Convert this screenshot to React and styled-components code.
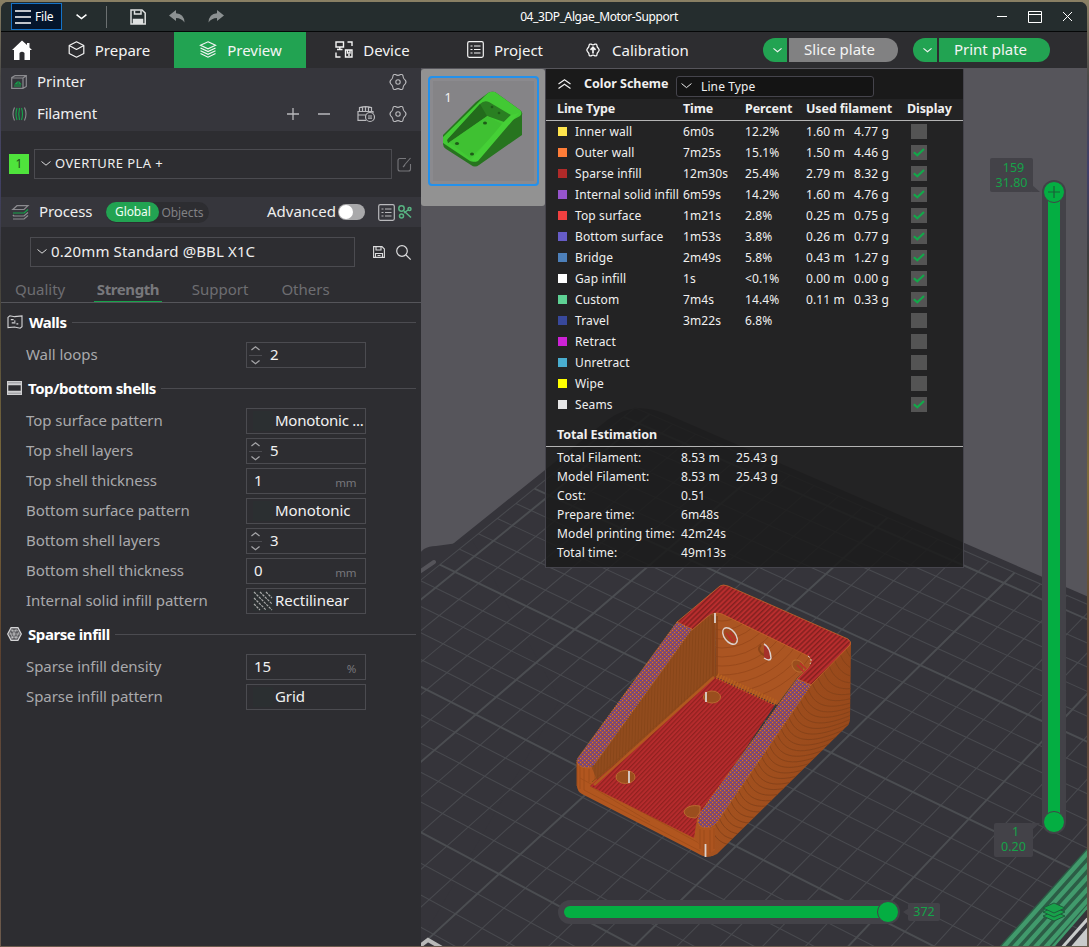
import React from "react";
import styled, { createGlobalStyle, css } from "styled-components";

const Global = createGlobalStyle`
  * { box-sizing: border-box; }
  html, body { margin: 0; padding: 0; }
  body { font-family: "Noto Sans", "Open Sans", sans-serif; overflow: hidden; }
`;

const Desktop = styled.div`
  width: 1089px;
  height: 947px;
  padding: 2px 2px 1px 1px;
  background: linear-gradient(180deg, #8a8064 0, #4b4a48 8%, #41406a 18%, #3d3d3d 27%, #7d6a3a 50%, #5a4030 70%, #6c5a4c 100%);
`;
const Window = styled.div`
  width: 1086px;
  height: 944px;
  display: flex;
  flex-direction: column;
  overflow: hidden;
  border-radius: 7px 7px 0 0;
  background: #2d2d31;
`;
const Icon = styled.svg.attrs((p) => ({ fill: "none", stroke: p.stroke || "currentColor" }))`
  display: block;
  flex: none;
  overflow: visible;
`;

/* ---------- title bar ---------- */
const TitleBar = styled.div`
  height: 30px;
  flex: none;
  display: grid;
  grid-template-columns: 420px 1fr 330px;
  align-items: center;
  background: #252d2e;
  border-bottom: 1px solid #050707;
  color: #fff;
`;
const TitleLeft = styled.div`
  display: flex;
  align-items: center;
  padding-left: 10px;
`;
const FileButton = styled.div`
  width: 51px;
  height: 27px;
  display: flex;
  align-items: center;
  gap: 4px;
  padding-left: 3px;
  border: 1px solid #1473c8;
  background: #04152b;
  font-size: 12px;
  letter-spacing: -0.2px;
`;
const TitleGap = styled.div`
  width: ${(p) => p.$w}px;
  flex: none;
`;
const TitleDivider = styled.div`
  width: 1px;
  height: 22px;
  background: #6b7071;
`;
const Title = styled.div`
  font-size: 12px;
  text-align: center;
  padding-left: 20px;
  white-space: nowrap;
  letter-spacing: -0.4px;
`;
const TitleRight = styled.div`
  display: flex;
  justify-content: flex-end;
  align-items: center;
  gap: 21px;
  padding-right: 15px;
`;

/* ---------- main tabs ---------- */
const TabBar = styled.div`
  height: 36px;
  flex: none;
  display: flex;
  align-items: center;
  background: #2d2d30;
  color: #f4f4f4;
`;
const Home = styled.div`
  width: 42px;
  display: flex;
  padding-left: 11px;
`;
const MainTab = styled.div`
  width: ${(p) => p.$w}px;
  height: 36px;
  display: flex;
  align-items: center;
  justify-content: center;
  gap: ${(p) => p.$gap || 10}px;
  background: ${(p) => (p.$active ? "#22a352" : "transparent")};
  font-size: 15px;
  line-height: 20px;
  padding: 0 0 1px 1px;
  white-space: nowrap;
`;
const PlateButton = styled.div`
  display: flex;
  gap: 2px;
  height: 24px;
  margin-left: ${(p) => p.$ml}px;
`;
const PlateArrow = styled.div`
  width: 24px;
  display: flex;
  align-items: center;
  justify-content: center;
  padding-left: 4px;
  border-radius: 12px 0 0 12px;
  background: #22a352;
`;
const PlateMain = styled.div`
  width: ${(p) => p.$w}px;
  display: flex;
  align-items: center;
  justify-content: center;
  padding: 0 8px 2px 0;
  border-radius: 0 12px 12px 0;
  background: ${(p) => p.$bg};
  font-size: 15px;
  white-space: nowrap;
`;

/* ---------- sidebar ---------- */
const Body = styled.div`
  flex: 1;
  display: flex;
  min-height: 0;
`;
const Sidebar = styled.div`
  width: 420px;
  flex: none;
  display: flex;
  flex-direction: column;
  color: #efefef;
`;
const HeaderRow = styled.div`
  height: ${(p) => p.$h}px;
  flex: none;
  display: flex;
  align-items: center;
  background: #36363c;
  color: #b9b9bc;
`;
const HeaderIcon = styled.div`
  width: ${(p) => p.$w || 36}px;
  display: flex;
  padding-left: ${(p) => p.$pl || 10}px;
  color: #8b8b8f;
`;
const HeaderText = styled.div`
  margin-top: ${(p) => p.$mt ?? -2}px;
  color: #efefef;
  font-size: 15px;
  line-height: 20px;
  white-space: nowrap;
  letter-spacing: ${(p) => p.$ls || "0px"};
`;
const HeaderTools = styled.div`
  margin-left: auto;
  display: flex;
  align-items: center;
  padding-right: ${(p) => p.$pr ?? 14}px;
`;
const FilamentRow = styled.div`
  height: 66px;
  flex: none;
  display: flex;
  align-items: center;
  padding: 0 8px;
  gap: 5px;
  color: #77777b;
`;
const Swatch = styled.div`
  width: 20px;
  height: 20px;
  background: #4fe33c;
  color: #1f4a1a;
  font-size: 12px;
  line-height: 20px;
  text-align: center;
`;
const Combo = styled.div`
  width: ${(p) => p.$w}px;
  height: 30px;
  display: flex;
  align-items: center;
  gap: 4px;
  padding: 0 0 2px 6px;
  border: 1px solid #4b4b50;
  color: #efefef;
  font-size: ${(p) => p.$fs}px;
  white-space: nowrap;
  letter-spacing: ${(p) => p.$ls || "0px"};
`;
const Segmented = styled.div`
  display: flex;
  align-items: center;
  width: 103px;
  height: 21px;
  margin-left: 14px;
  border-radius: 11px;
  background: #2d2d31;
  color: #818184;
  font-size: 12px;
  letter-spacing: -0.05px;
`;
const SegmentOn = styled.div`
  width: 53px;
  height: 20px;
  margin-right: 2px;
  border-radius: 10px;
  background: #22a352;
  color: #f2fff6;
  line-height: 19px;
  text-align: center;
  letter-spacing: -0.1px;
`;
const Toggle = styled.div`
  width: 27px;
  height: 16px;
  margin: 0 13px 1px 2px;
  padding: 1px;
  border-radius: 8px;
  background: #a9a9ab;
  &::before {
    content: "";
    display: block;
    width: 14px;
    height: 14px;
    border-radius: 50%;
    background: #fff;
  }
`;
const PresetRow = styled.div`
  height: 50px;
  flex: none;
  display: flex;
  align-items: center;
  padding-left: 29px;
  color: #dcdcdd;
`;
const SubTabs = styled.div`
  height: 26px;
  flex: none;
  display: flex;
  align-items: stretch;
  border-bottom: 1px solid #55555a;
  padding-left: 14px;
  font-size: 15px;
  color: #6d6d71;
`;
const SubTab = styled.div`
  width: ${(p) => p.$w}px;
  margin-right: ${(p) => p.$mr}px;
  line-height: 24px;
  height: 25px;
  text-align: center;
  white-space: nowrap;
  ${(p) =>
    p.$on &&
    css`
      font-weight: 700;
      letter-spacing: -0.4px;
      color: #78787c;
      border-bottom: 1px solid #16a34a;
    `}
`;
const GroupHead = styled.div`
  height: 36px;
  flex: none;
  display: flex;
  align-items: center;
  padding: 1px 5px 0 6px;
  color: #d4d4d6;
`;
const GroupIcon = styled.div`
  height: 15px;
  margin-top: 2px;
  display: flex;
`;
const GroupTitle = styled.div`
  margin-left: 6px;
  font-size: 15px;
  font-weight: 700;
  color: #fff;
  white-space: nowrap;
  letter-spacing: -0.43px;
`;
const GroupRule = styled.div`
  flex: 1;
  height: 1px;
  margin: 1px 0 0 5px;
  background: #4b4b50;
`;
const Setting = styled.div`
  height: 30px;
  flex: none;
  display: flex;
  align-items: center;
  padding: 2px 0 0 25px;
`;
const SettingLabel = styled.div`
  width: 220px;
  margin-top: -2px;
  font-size: 15px;
  color: #a9a9ac;
  white-space: nowrap;
  letter-spacing: -0.05px;
`;
const Field = styled.div`
  width: 120px;
  height: 26px;
  display: flex;
  align-items: center;
  border: 1px solid #4b4b50;
  padding: 0 9px 2px ${(p) => p.$pl}px;
  font-size: 15px;
  color: #f1f1f1;
  white-space: nowrap;
`;
const FieldIcon = styled.div`
  width: 22px;
  margin-top: 2px;
  flex: none;
  color: #a8a8a8;
`;
const FieldText = styled.span`
  letter-spacing: ${(p) => p.$ls || "-0.05px"};
`;
const Spin = styled.div`
  width: 13px;
  height: 18px;
  margin: 2px 8px 0 0;
  display: flex;
  flex-direction: column;
  justify-content: space-between;
  align-items: center;
  color: #a5a5a8;
`;
const SpinRule = styled.div`
  width: 13px;
  height: 1px;
  background: #4b4b50;
`;
const Unit = styled.span`
  margin: 4px 0 0 auto;
  font-size: 11.5px;
  letter-spacing: -0.4px;
  color: #77777c;
`;

/* ---------- viewport ---------- */
const Viewport = styled.div`
  position: relative;
  flex: 1;
  background: #56555b;
`;
const Scene = styled.svg`
  position: absolute;
  inset: 0;
  display: block;
`;
const ThumbCard = styled.div`
  position: absolute;
  left: 0;
  top: 1px;
  width: 124px;
  height: 137px;
  padding: 7px 0 0 7px;
  border-radius: 3px;
  background: #929292;
`;
const ThumbFrame = styled.div`
  width: 111px;
  height: 110px;
  border: 2px solid #2391ec;
  border-radius: 4px;
  background: #858487;
  box-shadow: inset 0 0 0 3px #8b8a8e;
`;
const Legend = styled.div`
  position: absolute;
  left: 124px;
  top: 1px;
  width: 419px;
  height: 499px;
  border: 1px solid #45444c;
  border-top: 0;
  background: rgba(27, 27, 27, 0.86);
  color: #f0f0f0;
  font-size: 12px;
  letter-spacing: 0.12px;
`;
const LegendTop = styled.div`
  height: 30px;
  display: flex;
  align-items: center;
  padding-left: 12px;
  background: #1a1a1a;
`;
const LegendTitle = styled.div`
  width: 92px;
  margin: -1px 0 0 13px;
  font-weight: 700;
  font-size: 12.5px;
  letter-spacing: -0.03px;
  white-space: nowrap;
`;
const SchemeSelect = styled.div`
  width: 198px;
  height: 21px;
  margin-top: 4px;
  display: flex;
  align-items: center;
  gap: 9px;
  padding-left: 4px;
  border: 1px solid #45444c;
  border-radius: 3px;
  background: #141414;
`;
const LegendHead = styled.div`
  height: 22px;
  display: grid;
  grid-template-columns: 126px 62px 61px 101px 1fr;
  align-items: center;
  padding: 0 0 3px 11px;
  border-bottom: 1px solid #b4b4b4;
  font-weight: 700;
  font-size: 12.5px;
  letter-spacing: -0.1px;
  white-space: nowrap;
`;
const LegendRow = styled.div`
  height: 21px;
  display: grid;
  grid-template-columns: 18px 108px 62px 61px 48px 57px 16px;
  align-items: center;
  padding-left: 11px;
  white-space: nowrap;
`;
const Dot = styled.div`
  width: 9px;
  height: 9px;
  margin-left: 1px;
  background: ${(p) => p.$c};
`;
const Check = styled.div`
  width: 16px;
  height: 15px;
  padding: 3px 0 0 2px;
  background: #545454;
  color: #12a84a;
`;
const TotalTitle = styled.div`
  height: 32px;
  padding: 11px 0 0 11px;
  border-bottom: 1px solid #b4b4b4;
  font-weight: 700;
  font-size: 12.5px;
  line-height: 17px;
  letter-spacing: -0.08px;
`;
const TotalRow = styled.div`
  height: 19px;
  display: grid;
  grid-template-columns: 124px 55px 1fr;
  align-items: center;
  padding-left: 11px;
  white-space: nowrap;
`;
const TotalRows = styled.div`
  padding-top: 1px;
`;
const VTrack = styled.div`
  position: absolute;
  left: 621px;
  top: 112px;
  width: 24px;
  height: 654px;
  padding: 12px 6px;
  border-radius: 12px;
  background: #434248;
`;
const HTrack = styled.div`
  position: absolute;
  left: 137px;
  top: 832px;
  width: 342px;
  height: 24px;
  padding: 6px 12px 6px 6px;
  border-radius: 12px;
  background: #434248;
`;
const Bar = styled.div`
  height: 100%;
  border-radius: 6px;
  background: #04ae42;
`;
const Knob = styled.div`
  position: absolute;
  left: ${(p) => p.$x}px;
  top: ${(p) => p.$y}px;
  width: 22px;
  height: 22px;
  display: flex;
  align-items: center;
  justify-content: center;
  border-radius: 50%;
  border: 1px solid #434248;
  background: #04ae42;
  color: #1b5f38;
`;
const Tip = styled.div`
  position: absolute;
  left: ${(p) => p.$x}px;
  top: ${(p) => p.$y}px;
  width: ${(p) => p.$w}px;
  height: ${(p) => p.$h}px;
  border-radius: 2px;
  background: #434248;
  color: #15a249;
  font-size: 12.5px;
  line-height: 15px;
  text-align: center;
  padding-top: ${(p) => p.$pt ?? 2}px;
`;
const TipTop = styled.div`
  padding-left: 4px;
`;
const TipTail = styled.svg`
  position: absolute;
  left: ${(p) => p.$x}px;
  top: ${(p) => p.$y}px;
  fill: #434248;
`;

/* ---------- bed geometry ---------- */
const solve = (m) => {
  const n = m.length;
  for (let i = 0; i < n; i++) {
    let k = i;
    for (let r = i; r < n; r++) if (Math.abs(m[r][i]) > Math.abs(m[k][i])) k = r;
    [m[i], m[k]] = [m[k], m[i]];
    for (let r = 0; r < n; r++) {
      if (r === i) continue;
      const f = m[r][i] / m[i][i];
      for (let c = i; c <= n; c++) m[r][c] -= f * m[i][c];
    }
  }
  return m.map((row, i) => row[n] / row[i]);
};
const anchors = [
  [0, 1, 455, 572],
  [3, -1, 1004, 583],
  [4, 2, 876, 917],
  [2, 3, 499, 874],
];
const H = solve(
  anchors.flatMap(([u, v, x, y]) => [
    [u, v, 1, 0, 0, 0, -u * x, -v * x, x],
    [0, 0, 0, u, v, 1, -u * y, -v * y, y],
  ])
);
const project = (u, v) => {
  const w = H[6] * u + H[7] * v + 1;
  return [(H[0] * u + H[1] * v + H[2]) / w, (H[3] * u + H[4] * v + H[5]) / w];
};
const seg = (a, b) => `M${a.map((n) => n.toFixed(1)).join(" ")}L${b.map((n) => n.toFixed(1)).join(" ")}`;
const U0 = -0.13, V0 = -1.13, UM = 5.1, VM = 4;
const thin = [seg(project(U0, V0), project(U0, VM)), seg(project(U0, V0), project(UM, V0))];
const bold = [];
for (let i = 0; i <= 25; i++) (i % 5 ? thin : bold).push(seg(project(i / 5, V0), project(i / 5, VM)));
for (let i = -5; i <= 20; i++) (i % 5 ? thin : bold).push(seg(project(U0, i / 5), project(UM, i / 5)));
const bedPath = () => {
  const e = -0.2, f = -1.2;
  const p = [project(e, VM), project(e, f + 0.3), project(e, f), project(e + 0.3, f), project(UM, f), project(UM, VM)];
  const s = p.map((q) => q.map((n) => n.toFixed(1)).join(" "));
  return `M${s[0]}L${s[1]}Q${s[2]} ${s[3]}L${s[4]}L${s[5]}Z`;
};

const Bed = () => (
  <g>
    <path d={bedPath()} fill="#35343a" />
    <path d="M416 950V556L424 549Q429 546 436 546L458 543Q465 541 470 536L560 700Z" fill="#35343a" />
    <path d="M418 573L434 562" stroke="#55545a" strokeWidth="4" strokeLinecap="round" />
    <path d={thin.join("")} stroke="#48494e" strokeWidth="1.1" fill="none" />
    <path d={bold.join("")} stroke="#4b4d51" strokeWidth="2" fill="none" />
    <path d="M420 946L428 940L442 948" stroke="#b9b9b9" strokeWidth="4" fill="none" />
    <path d="M1089 846L998 948H1052L1089 905Z" fill="#2c5d46" />
    <g stroke="#419a6c" strokeWidth="4.400">
      <path d="M1092 848L1001 950M1092 860L1011.500 950M1092 872L1022 950M1092 884L1032.500 950M1092 895L1043 950" />
    </g>
    <path d="M1089 905L1050 950" stroke="#419a6c" strokeWidth="2.500" />
    <path d="M1092 914L1060 950" stroke="#c9cbcb" strokeWidth="3" />
    <path d="M1092 922V950H1068Z" fill="#c9cbcb" />
    <g fill="#17a24a" stroke="#1f5c3c" strokeWidth="1">
      <path d="M1043 917L1054 912L1065 917L1054 922Z" transform="translate(0 -1)" />
      <path d="M1043 912L1054 907L1065 912L1054 917Z" />
      <path d="M1043 908L1054 903L1065 908L1054 913Z" />
    </g>
  </g>
);

const SIDE = "M851 642L850 719Q850 724 846 727L717 854Q712 857 706 857L708 828L717 822L811 685Z";
const BACK = "M715 613H721L812 657L812 664L797 678L777 705L716 677Z";

const shellCurves = Array.from({ length: 34 }, (_, i) => {
  const t = i / 33;
  const x = t < 0.22 ? 851 - (t / 0.22) * 40 : 811 - ((t - 0.22) / 0.78) * 100;
  const y = t < 0.22 ? 642 + (t / 0.22) * 43 : 685 + ((t - 0.22) / 0.78) * 143;
  return `M${x.toFixed(1)} ${y.toFixed(1)}C${(x + 7).toFixed(1)} ${(y + 19).toFixed(1)} ${(x + 24).toFixed(1)} ${(y + 24).toFixed(1)} ${(x + 62).toFixed(1)} ${(y + 6).toFixed(1)}`;
});

const Part = () => (
  <g>
    <defs>
      <pattern id="ledge" width="3.6" height="3.6" patternUnits="userSpaceOnUse" patternTransform="rotate(-44)">
        <rect width="3.6" height="3.6" fill="#b92d2e" />
        <rect width="3.6" height="1.5" fill="#84201f" />
      </pattern>
      <pattern id="floor" width="3.6" height="3.2" patternUnits="userSpaceOnUse" patternTransform="rotate(-46)">
        <rect width="3.6" height="3.2" fill="#b52b2d" />
        <rect width="3.6" height="1.2" fill="#90211f" />
      </pattern>
      <pattern id="slope" width="4" height="4" patternUnits="userSpaceOnUse">
        <rect width="4" height="4" fill="#96504e" />
        <rect width="2" height="1" fill="#6440a0" />
        <rect x="2" y="2" width="2" height="1" fill="#6440a0" />
        <rect x="2" width="1" height="1" fill="#d0733a" />
        <rect y="2" width="1" height="1" fill="#d0733a" />
      </pattern>
      <pattern id="ribs" width="3" height="6" patternUnits="userSpaceOnUse" patternTransform="rotate(2)">
        <rect width="3" height="6" fill="#914b1d" />
        <rect width="1" height="6" fill="#884619" />
      </pattern>
      <linearGradient id="sideFill" x1="0" y1="0" x2="1" y2="0">
        <stop offset="0" stopColor="#a5521f" />
        <stop offset="1" stopColor="#98491b" />
      </linearGradient>
      <clipPath id="sideClip"><path d={SIDE} /></clipPath>
      <clipPath id="backClip"><path d={BACK} /></clipPath>
    </defs>
    <path d="M577 760V786Q577 791 582 794L697 853Q706 859 714 855L725 822L700 800L600 770Z" fill="#b1561f" />
    <path d="M580 778L697 842L706 850M590 786L650 822M584 790L700 851" stroke="#a04d1a" strokeWidth="0.900" fill="none" />
    <path d="M577 762V786M580 766V789M584 768V790M589 769V782M595 766V780" stroke="#9e4c1a" strokeWidth="1" />
    <path d={SIDE} fill="url(#sideFill)" />
    <g clipPath="url(#sideClip)" fill="none" stroke="#87431a" strokeWidth="1">
      {shellCurves.map((d) => <path key={d} d={d} />)}
    </g>
    <path d="M692 629L706 617L715 613L716 677L598 783L592 768Z" fill="url(#ribs)" />
    <path d={BACK} fill="#ab5522" />
    <g clipPath="url(#backClip)" fill="none" stroke="#9a4a1c" strokeWidth="1">
      {Array.from({ length: 11 }, (_, i) => (
        <ellipse key={i} cx="722" cy="600" rx={16 + i * 9} ry={12 + i * 9} />
      ))}
    </g>
    <path d="M713 616V676M717 616V676" stroke="#8a4319" strokeWidth="1.5" />
    <path d="M715 677L775 705L740 757L697 820L694 838L590 786L598 779Z" fill="url(#floor)" />
    <path d="M714 677L594 785" stroke="#b0591f" strokeWidth="2.500" />
    <path d="M714 674L592 782" stroke="#8b481a" strokeWidth="1" />
    <path d="M717 676L776 703" stroke="#b8621f" strokeWidth="6" strokeDasharray="1.5 1.5" />
    <path d="M677 622L720 586Q723 584 728 586L848 639Q852 642 850 645L811 685L797 679L808 668Q814 660 808 656L722 614Q714 611 707 617L692 630Z" fill="url(#ledge)" stroke="#c4672a" strokeWidth="0.8" />
    <path d="M677 622L692 629L594 765Q588 770 580 766Q575 763 578 758Z" fill="url(#slope)" stroke="#c06a2a" strokeWidth="1" strokeDasharray="1.5 1" />
    <path d="M797 679L811 685L717 822Q709 831 700 826Q696 821 700 813Z" fill="url(#slope)" stroke="#c06a2a" strokeWidth="1" strokeDasharray="1.5 1" />
    <path d="M696 824L695 838L706 856L715 850V826Q706 832 696 824Z" fill="#ad541f" />
    <path d="M700 829V849M704 830V853M710 830V853M714 828V849" stroke="#9b4b1a" strokeWidth="1" />
    <g fill="#9a4e1e" stroke="#b86a2e" strokeWidth="1">
      <ellipse cx="712" cy="697" rx="8.5" ry="6" />
      <ellipse cx="625.500" cy="777" rx="9.500" ry="6.500" />
      <path d="M700 806Q688 804 684 811Q684 818 696 818L700 812Z" />
      <ellipse cx="798" cy="666" rx="7" ry="5" transform="rotate(45 798 666)" />
    </g>
    <path d="M761 645Q757 649 761 653Q765 656 768 658" stroke="#8d4519" strokeWidth="2" fill="none" />
    <g fill="none" stroke="#dcd2ce" strokeWidth="1.400">
      <ellipse cx="730" cy="636" rx="9.500" ry="5.600" transform="rotate(52 730 636)" fill="#a24a1f" />
      <path d="M764 644Q770 647 771 658Q770 662 764 658" fill="#a5312a" />
      <path d="M706 692V702M629 771V783M705.500 844V857M715 613V623" strokeWidth="1.8" />
      <path d="M808 656Q813 659 810 664" strokeDasharray="2 2" strokeWidth="1" />
    </g>
    <path d="M726 633L734 642M728 636L732 641M730 632L736 640M797 665L804 672M800 663L806 669" stroke="#bb2e2a" strokeWidth="1.500" />
  </g>
);

const ThumbModel = () => (
  <Icon width="107" height="106" viewBox="430 78 107 106" stroke="none">
    <path d="M443 135L476 102L488 93Q491 91 495 92L520 110Q523 112 522 115V135L479 165Q475 168 471 165L446 149Q443 147 443 144Z" fill="#27741f" />
    <path d="M443 137L488 93Q491 91 495 92L520 110Q523 113 520 116L507 123L478 160Q474 163 470 161L443 143Z" fill="#42c934" />
    <path d="M448 139L480 104Q484 100 489 102L511 115L507 123L487 116L448 143Z" fill="#2a7f22" />
    <path d="M487 116L502 124L497 132L470 158L449 142Z" fill="#3fc132" />
    <path d="M511 115L519 113L478 161Q475 163 471 160L497 130Q504 121 511 115Z" fill="#45d036" />
    <path d="M480 104L487 116L448 143L447 140Z" fill="#236b1c" />
    <g fill="#1e5c18">
      <ellipse cx="485" cy="123" rx="2" ry="1.500" />
      <ellipse cx="457" cy="143.500" rx="2" ry="1.500" />
      <ellipse cx="472" cy="154" rx="2" ry="1.500" />
      <circle cx="492" cy="107" r="1.300" />
      <circle cx="499" cy="113" r="1.300" />
    </g>
    <text x="444.500" y="102" fontSize="12.500" fill="#f4f4f4">1</text>
  </Icon>
);

/* ---------- small drawings ---------- */
const Chevron = ({ w = 10, up, sw = 1.2 }) => (
  <Icon width={w} height={w / 2} viewBox="0 0 10 5" strokeWidth={sw}>
    <path d={up ? "M0.500 4.500L5 0.800L9.500 4.500" : "M0.500 0.500L5 4.200L9.500 0.500"} />
  </Icon>
);
const GEAR =
  "M5 1.500H6.500Q9 3.200 11.500 1.500H13Q14.200 2 14.200 4Q14.400 5.600 16.200 7.200Q17.800 9 16.200 10.800Q14.400 12.400 14.200 14Q14.200 16 13 16.500H11.500Q9 14.800 6.500 16.500H5Q3.800 16 3.800 14Q3.600 12.400 1.800 10.800Q0.200 9 1.800 7.200Q3.600 5.600 3.800 4Q3.800 2 5 1.500Z";
const Gear = () => (
  <Icon width="18" height="18" viewBox="0 0 18 18" strokeWidth="1.100">
    <path d={GEAR} strokeLinejoin="round" />
    <circle cx="9" cy="9" r="2.200" />
  </Icon>
);
const ListIcon = ({ s = 17 }) => (
  <Icon width={s} height={s} viewBox="0 0 17 17" strokeWidth="1.200">
    <rect x="0.700" y="0.700" width="15.600" height="15.600" rx="1.500" />
    <path d="M3.500 5H5.500M7 5H13.500M3.500 8.500H5.500M7 8.500H13.500M3.500 12H5.500M7 12H13.500" />
  </Icon>
);

const settingField = (kind, value, unit) => {
  if (kind === "spin")
    return (
      <Field $pl={2}>
        <Spin>
          <Chevron w={9} up sw={1.400} />
          <SpinRule />
          <Chevron w={9} sw={1.400} />
        </Spin>
        {value}
      </Field>
    );
  if (kind === "text")
    return (
      <Field $pl={7}>
        {value}
        <Unit>{unit}</Unit>
      </Field>
    );
  return (
    <Field $pl={6}>
      <FieldIcon>
        <Icon width="20" height="20" viewBox="0 0 20 20">
          <rect width="20" height="20" fill="#2b2f31" stroke="none" />
          {unit === "lines" && (
            <path d="M1 1L19 19M7 1L19 13M13 1L19 7M1 7L13 19M1 13L7 19" strokeWidth="1.200" strokeDasharray="2.500 1" />
          )}
        </Icon>
      </FieldIcon>
      <FieldText $ls={value.endsWith("...") ? "-0.25px" : undefined}>{value}</FieldText>
    </Field>
  );
};

const groups = [
  {
    title: "Walls",
    icon: (
      <Icon width="16" height="14" viewBox="0 0 17 15" strokeWidth="1.200">
        <path d="M1 2.500L3 0.800L8 1.800L16 1V12.500L14 14.200L8 12.800L1 13.500Z M4 5H7M7.500 6.500H9M5 8.500H9M10 9.500H12" />
      </Icon>
    ),
    rows: [["Wall loops", "spin", "2"]],
  },
  {
    title: "Top/bottom shells",
    icon: (
      <Icon width="15" height="14" viewBox="0 0 15 14" stroke="none">
        <path d="M0 0H15V14H0ZM1.300 4.200V9.800H13.700V4.200Z" fillRule="evenodd" fill="#cfcfd1" />
        <path d="M1 1.800H14M1 12.200H14" stroke="#85858a" strokeWidth="0.800" />
      </Icon>
    ),
    rows: [
      ["Top surface pattern", "combo", "Monotonic ..."],
      ["Top shell layers", "spin", "5"],
      ["Top shell thickness", "text", "1", "mm"],
      ["Bottom surface pattern", "combo", "Monotonic"],
      ["Bottom shell layers", "spin", "3"],
      ["Bottom shell thickness", "text", "0", "mm"],
      ["Internal solid infill pattern", "combo", "Rectilinear", "lines"],
    ],
  },
  {
    title: "Sparse infill",
    icon: (
      <Icon width="15" height="14" viewBox="0 0 16 15">
        <path d="M4.300 0.700H11.700L15.300 7.500L11.700 14.300H4.300L0.700 7.500Z" strokeWidth="1.300" fill="#5c5c60" />
        <path d="M4 4H12M2.500 7.500H13.500M4 11H12M5 2L10 13M10 2L5 13M3 5L6 12M13 5L9.500 12" strokeWidth="0.600" />
      </Icon>
    ),
    rows: [
      ["Sparse infill density", "text", "15", "%"],
      ["Sparse infill pattern", "combo", "Grid"],
    ],
  },
];

const legend = [
  ["#ffe54d", "Inner wall", "6m0s", "12.2%", "1.60 m", "4.77 g", 0],
  ["#ff7d38", "Outer wall", "7m25s", "15.1%", "1.50 m", "4.46 g", 1],
  ["#b02a29", "Sparse infill", "12m30s", "25.4%", "2.79 m", "8.32 g", 1],
  ["#9654cc", "Internal solid infill", "6m59s", "14.2%", "1.60 m", "4.76 g", 1],
  ["#f04040", "Top surface", "1m21s", "2.8%", "0.25 m", "0.75 g", 1],
  ["#665cc7", "Bottom surface", "1m53s", "3.8%", "0.26 m", "0.77 g", 1],
  ["#4d80ba", "Bridge", "2m49s", "5.8%", "0.43 m", "1.27 g", 1],
  ["#ffffff", "Gap infill", "1s", "<0.1%", "0.00 m", "0.00 g", 1],
  ["#5ed194", "Custom", "7m4s", "14.4%", "0.11 m", "0.33 g", 1],
  ["#38489b", "Travel", "3m22s", "6.8%", "", "", 0],
  ["#cd22d6", "Retract", "", "", "", "", 0],
  ["#49adcf", "Unretract", "", "", "", "", 0],
  ["#ffff00", "Wipe", "", "", "", "", 0],
  ["#e6e6e6", "Seams", "", "", "", "", 1],
];
const totals = [
  ["Total Filament:", "8.53 m", "25.43 g"],
  ["Model Filament:", "8.53 m", "25.43 g"],
  ["Cost:", "0.51"],
  ["Prepare time:", "6m48s"],
  ["Model printing time:", "42m24s"],
  ["Total time:", "49m13s"],
];

export default function App() {
  return (
    <Desktop>
      <Global />
      <Window>
        <TitleBar>
          <TitleLeft>
            <FileButton>
              <Icon width="16" height="14" viewBox="0 0 16 14" strokeWidth="1.500">
                <path d="M0 1H16M0 7H16M0 13H16" />
              </Icon>
              File
            </FileButton>
            <TitleGap $w={14} />
            <Chevron w={11} sw={1.400} />
            <TitleGap $w={19} />
            <TitleDivider />
            <TitleGap $w={23} />
            <Icon width="16" height="16" viewBox="0 0 16 16" strokeWidth="1.500" stroke="#dfe1e1">
              <path d="M1 1H12L15.200 4V15H1Z" />
              <path d="M4.500 1.500V5H11V1.500" />
              <path d="M3.500 15V10.500H12.500V15" fill="#dfe1e1" />
            </Icon>
            <TitleGap $w={23} />
            <Icon width="16" height="13" viewBox="0 0 16 13" stroke="none">
              <path d="M0 5.500L7 0V3.300Q15 3.500 15.500 12.500Q12.500 8 7 8V11Z" fill="#8c9192" />
            </Icon>
            <TitleGap $w={23} />
            <Icon width="16" height="13" viewBox="0 0 16 13" stroke="none">
              <path d="M16 5.500L9 0V3.300Q1 3.500 0.500 12.500Q3.500 8 9 8V11Z" fill="#8c9192" />
            </Icon>
          </TitleLeft>
          <Title>04_3DP_Algae_Motor-Support</Title>
          <TitleRight>
            <Icon width="10" height="2" viewBox="0 0 10 2"><path d="M0 0.500H10" /></Icon>
            <Icon width="14" height="12" viewBox="0 0 14 12"><path d="M0.500 0.500H13.500V11.500H0.500ZM0.500 3.500H13.500" /></Icon>
            <Icon width="9" height="9" viewBox="0 0 9 9"><path d="M0 0L9 9M9 0L0 9" /></Icon>
          </TitleRight>
        </TitleBar>

        <TabBar>
          <Home>
            <Icon width="20" height="20" viewBox="0 0 20 20" stroke="none">
              <path d="M10 0.500L15 5V3H17.500V7.500L20 10H18V20H12.500V13Q10 10.500 7.500 13V20H2V10H0Z" fill="#fff" />
            </Icon>
          </Home>
          <MainTab $w={131}>
            <Icon width="17" height="17" viewBox="0 0 17 17" strokeWidth="1.200">
              <path d="M8.500 0.800L15.800 4.500V12.500L8.500 16.200L1.200 12.500V4.500ZM1.200 4.500L8.500 8.500L15.800 4.500" strokeLinejoin="round" />
            </Icon>
            Prepare
          </MainTab>
          <MainTab $w={132} $active>
            <Icon width="18" height="17" viewBox="0 0 18 17" strokeWidth="1.200">
              <path d="M9 0.800L16.500 4.300L9 7.800L1.500 4.300ZM1.500 7L9 10.500L16.500 7M1.500 9.800L9 13.300L16.500 9.800M1.500 12.500L9 16.200L16.500 12.500" />
            </Icon>
            Preview
          </MainTab>
          <MainTab $w={132}>
            <Icon width="18" height="17" viewBox="0 0 18 17" strokeWidth="1.400">
              <path d="M1 1H8.500V6H1ZM4.800 6V8.500M2 8.500H7.500M12.500 1H17V5M1 11.500V16H5.500M10.500 9H17V16H10.500ZM12.500 9V12H15V9M13 14H15" />
            </Icon>
            Device
          </MainTab>
          <MainTab $w={133}>
            <ListIcon />
            Project
          </MainTab>
          <MainTab $w={132} $gap={12}>
            <Icon width="14" height="14" viewBox="0 0 18 18" strokeWidth="1.700">
              <path d={GEAR} />
              <path d="M9 13.500V6M5.800 8.800L9 5.500L12.200 8.800" strokeWidth="2.200" />
            </Icon>
            Calibration
          </MainTab>
          <PlateButton $ml={60}>
            <PlateArrow><Chevron w={9} /></PlateArrow>
            <PlateMain $w={109} $bg="#818182">Slice plate</PlateMain>
          </PlateButton>
          <PlateButton $ml={15}>
            <PlateArrow><Chevron w={9} /></PlateArrow>
            <PlateMain $w={111} $bg="#22a352">Print plate</PlateMain>
          </PlateButton>
        </TabBar>

        <Body>
          <Sidebar>
            <HeaderRow $h={28}>
              <HeaderIcon>
                <Icon width="16" height="14" viewBox="0 0 16 14" strokeWidth="1.200">
                  <path d="M0.700 2.500L4 0.700H15.300V11.500L12 13.300H0.700ZM0.700 3H12V13.300M12 3L15.300 0.700" />
                  <path d="M3 11H10M4.500 9H9.500L8 7H6.500Z" stroke="#16a34a" />
                </Icon>
              </HeaderIcon>
              <HeaderText>Printer</HeaderText>
              <HeaderTools><Gear /></HeaderTools>
            </HeaderRow>
            <HeaderRow $h={35}>
              <HeaderIcon $pl={11}>
                <Icon width="15" height="14" viewBox="0 0 15 14" strokeWidth="1.100">
                  <path d="M2.500 0.500Q-0.500 7 2.500 13.500M12.500 0.500Q15.500 7 12.500 13.500" />
                  <path d="M5 1Q3 7 5 13M7.500 1Q6 7 7.500 13M9.500 1Q11.500 7 9.500 13" stroke="#16a34a" />
                </Icon>
              </HeaderIcon>
              <HeaderText $ls="-0.15px">Filament</HeaderText>
              <HeaderTools>
                <Icon width="12" height="12" viewBox="0 0 12 12" strokeWidth="1.300"><path d="M6 0V12M0 6H12" /></Icon>
                <TitleGap $w={19} />
                <Icon width="12" height="12" viewBox="0 0 12 12" strokeWidth="1.300"><path d="M0 6H12" /></Icon>
                <TitleGap $w={27} />
                <Icon width="18" height="16" viewBox="0 0 18 16" strokeWidth="1.200">
                  <path d="M9 14.300H1V5.500H16V7M2.500 5.500V1.500Q9 -0.200 14.500 1.500V5.500M5.500 1V5.500M8.500 1V5.500M11.500 1V5.500M1 9H9" />
                  <circle cx="13" cy="11" r="4.500" />
                  <path d="M11 10H15M11 12.200H15" />
                </Icon>
                <TitleGap $w={14} />
                <Gear />
              </HeaderTools>
            </HeaderRow>
            <FilamentRow>
              <Swatch>1</Swatch>
              <Combo $w={358} $fs={13} $ls="0.400px"><Chevron sw={0.900} />OVERTURE PLA +</Combo>
              <Icon width="15" height="15" viewBox="0 0 15 15" strokeWidth="1.100">
                <path d="M9 1.500H3Q1 1.500 1 3.500V12Q1 14 3 14H11.500Q13.500 14 13.500 12V7M7 8.500L13.500 1M6 10L8 8" />
              </Icon>
            </FilamentRow>
            <HeaderRow $h={30}>
              <HeaderIcon $w={38} $pl={11}>
                <Icon width="17" height="15" viewBox="0 0 17 15" strokeWidth="1.200">
                  <path d="M0.800 4.500L5 0.700H16L12 4.500ZM1 11L12 11L16 7.500M0.800 11L2 10M1 14L12 14L16 10.500" />
                  <path d="M1 8H12L16 4.500" stroke="#16a34a" />
                </Icon>
              </HeaderIcon>
              <HeaderText $mt={-3} $ls="-0.100px">Process</HeaderText>
              <Segmented><SegmentOn>Global</SegmentOn>Objects</Segmented>
              <HeaderTools $pr={9}>
                <HeaderText $mt={-3}>Advanced</HeaderText>
                <Toggle />
                <ListIcon />
                <TitleGap $w={3} />
                <Icon width="14" height="14" viewBox="0 0 14 14" strokeWidth="1.500" stroke="#58b482">
                  <circle cx="3.500" cy="3.500" r="2.700" />
                  <circle cx="3.500" cy="11" r="2" />
                  <circle cx="11.500" cy="4" r="1.500" />
                  <path d="M6 6L13 12.500M6 8L10 5" />
                </Icon>
              </HeaderTools>
            </HeaderRow>
            <PresetRow>
              <Combo $w={325} $fs={15} $ls="0.120px"><Chevron sw={0.900} />0.20mm Standard @BBL X1C</Combo>
              <TitleGap $w={18} />
              <Icon width="12" height="12" viewBox="0 0 12 12" strokeWidth="1.100">
                <path d="M0.600 0.600H9L11.400 3V11.400H0.600ZM3 0.600V4H8V0.600M2.500 11.400V7.500H9.500V11.400M4.500 9.500H7.500" />
              </Icon>
              <TitleGap $w={11} />
              <Icon width="15" height="15" viewBox="0 0 15 15" strokeWidth="1.200">
                <circle cx="6" cy="6" r="5.300" />
                <path d="M10 10L14.700 14.700" />
              </Icon>
            </PresetRow>
            <SubTabs>
              <SubTab $w={50} $mr={29}>Quality</SubTab>
              <SubTab $w={68} $mr={29} $on>Strength</SubTab>
              <SubTab $w={58} $mr={32}>Support</SubTab>
              <SubTab $w={49} $mr={0}>Others</SubTab>
            </SubTabs>
            {groups.map((g) => (
              <React.Fragment key={g.title}>
                <GroupHead>
                  <GroupIcon>{g.icon}</GroupIcon>
                  <GroupTitle>{g.title}</GroupTitle>
                  <GroupRule />
                </GroupHead>
                {g.rows.map(([label, kind, value, unit]) => (
                  <Setting key={label}>
                    <SettingLabel>{label}</SettingLabel>
                    {settingField(kind, value, unit)}
                  </Setting>
                ))}
              </React.Fragment>
            ))}
          </Sidebar>

          <Viewport>
            <Scene width="666" height="878" viewBox="421 68 666 878">
              <Bed />
              <Part />
            </Scene>
            <ThumbCard>
              <ThumbFrame><ThumbModel /></ThumbFrame>
            </ThumbCard>
            <Legend>
              <LegendTop>
                <Icon width="13" height="10" viewBox="0 0 13 10" strokeWidth="1.200">
                  <path d="M0.500 5L6.500 0.800L12.500 5M0.500 9.500L6.500 5.300L12.500 9.500" />
                </Icon>
                <LegendTitle>Color Scheme</LegendTitle>
                <SchemeSelect><Chevron w={11} sw={0.900} />Line Type</SchemeSelect>
              </LegendTop>
              <LegendHead>
                <span>Line Type</span><span>Time</span><span>Percent</span><span>Used filament</span><span>Display</span>
              </LegendHead>
              {legend.map(([c, name, time, pct, m, g, on]) => (
                <LegendRow key={name}>
                  <Dot $c={c} />
                  <span>{name}</span>
                  <span>{time}</span><span>{pct}</span><span>{m}</span><span>{g}</span>
                  <Check>
                    {on ? (
                      <Icon width="12" height="9" viewBox="0 0 12 9" strokeWidth="2.200"><path d="M0.800 4.200L4.300 7.300L11 1" /></Icon>
                    ) : null}
                  </Check>
                </LegendRow>
              ))}
              <TotalTitle>Total Estimation</TotalTitle>
              <TotalRows>
                {totals.map(([a, b, c]) => (
                  <TotalRow key={a}><span>{a}</span><span>{b}</span><span>{c}</span></TotalRow>
                ))}
              </TotalRows>
            </Legend>
            <Tip $x={569} $y={90} $w={43} $h={34}><TipTop>159</TipTop>31.80</Tip>
            <TipTail $x={611} $y={116} width="8" height="8"><path d="M0 1L8 8H0Z" /></TipTail>
            <VTrack><Bar /></VTrack>
            <Knob $x={622} $y={113}>
              <Icon width="12" height="12" viewBox="0 0 12 12" strokeWidth="1.200"><path d="M6 0V12M0 6H12" /></Icon>
            </Knob>
            <Knob $x={622} $y={743} />
            <Tip $x={573} $y={755} $w={39} $h={34} $pt={1}><TipTop>1</TipTop>0.20</Tip>
            <TipTail $x={611} $y={755} width="8" height="8"><path d="M0 0H8L0 7Z" /></TipTail>
            <HTrack><Bar /></HTrack>
            <Knob $x={456} $y={833} />
            <Tip $x={487} $y={835} $w={32} $h={18} $pt={1}>372</Tip>
            <TipTail $x={482} $y={840} width="6" height="8"><path d="M6 0V8L0 4Z" /></TipTail>
          </Viewport>
        </Body>
      </Window>
    </Desktop>
  );
}
